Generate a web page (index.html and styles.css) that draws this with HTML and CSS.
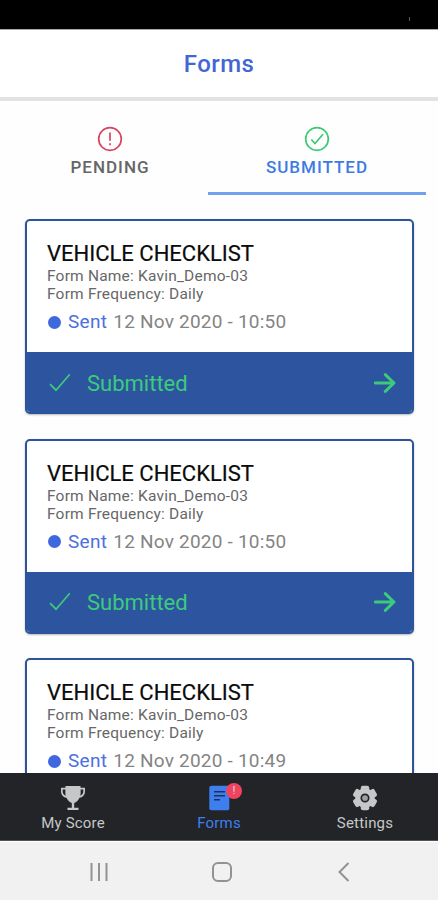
FILE: index.html
```html
<!DOCTYPE html>
<html lang="en">
<head>
<meta charset="utf-8">
<title>Forms</title>
<link rel="stylesheet" href="styles.css">
</head>
<body>
<svg class="defs" width="0" height="0" aria-hidden="true">
  <symbol id="check" viewBox="0 0 22 20"><path d="M1 11.200 7 17.200 20.800 1.300" fill="none" stroke="currentColor" stroke-width="1.700"/></symbol>
  <symbol id="arrow" viewBox="0 0 22 20"><path d="M1.300 10H20M11.300 1.600 20 10l-8.700 8.400" fill="none" stroke="currentColor" stroke-width="2.900" stroke-linecap="round" stroke-linejoin="round"/></symbol>
</svg>
<div class="screen">
  <div class="status"><span class="tick"></span></div>
  <header class="header"><h1>Forms</h1></header>
  <div class="tabs">
    <div class="tab">
      <svg class="tab-icon pending" viewBox="0 0 26 26"><circle cx="13" cy="13" r="11.300"/><path d="M13 6.500v8.300M13 17.300v2"/></svg>
      <span>PENDING</span>
    </div>
    <div class="tab active">
      <svg class="tab-icon done" viewBox="0 0 26 26"><circle cx="13" cy="13" r="11.300"/><path d="m7.300 13.500 3.700 4L19 8.300"/></svg>
      <span>SUBMITTED</span>
    </div>
  </div>
  <main class="list">
    <article class="card">
      <div class="body">
        <h2>VEHICLE CHECKLIST</h2>
        <p>Form Name: Kavin_Demo-03</p>
        <p>Form Frequency: Daily</p>
        <div class="sent"><i class="dot"></i><b>Sent</b><time>12 Nov 2020 - 10:50</time></div>
      </div>
      <div class="foot"><svg class="check"><use href="#check"/></svg><span>Submitted</span><svg class="arrow"><use href="#arrow"/></svg></div>
    </article>
    <article class="card">
      <div class="body">
        <h2>VEHICLE CHECKLIST</h2>
        <p>Form Name: Kavin_Demo-03</p>
        <p>Form Frequency: Daily</p>
        <div class="sent"><i class="dot"></i><b>Sent</b><time>12 Nov 2020 - 10:50</time></div>
      </div>
      <div class="foot"><svg class="check"><use href="#check"/></svg><span>Submitted</span><svg class="arrow"><use href="#arrow"/></svg></div>
    </article>
    <article class="card">
      <div class="body">
        <h2>VEHICLE CHECKLIST</h2>
        <p>Form Name: Kavin_Demo-03</p>
        <p>Form Frequency: Daily</p>
        <div class="sent"><i class="dot"></i><b>Sent</b><time>12 Nov 2020 - 10:49</time></div>
      </div>
    </article>
  </main>
  <nav class="nav">
    <div class="item">
      <svg class="nav-icon" viewBox="0 0 26 26"><path fill="currentColor" d="M5.500 1h15v1.800H25V6.500c0 3.300-2.300 5.900-5.700 6.400-1.300 2.800-3 4.400-5.100 5v4.800H18.500V25h-11v-2.300h4.300v-4.800c-2.100-.6-3.800-2.200-5.100-5C3.300 12.400 1 9.800 1 6.500V2.800h4.500zM2.700 4.500v2c0 2 1.200 3.600 3 4.200C5.200 8.900 5.300 6.600 5.400 4.500zm17.900 0c.1 2.100.2 4.400-.3 6.200 1.800-.6 3-2.200 3-4.200v-2z"/></svg>
      <span>My Score</span>
    </div>
    <div class="item on">
      <div class="icon-wrap">
        <svg class="nav-icon" viewBox="0 0 26 26"><rect x="3.300" y=".7" width="20" height="24.600" rx="2" fill="currentColor"/><path d="M8 6.800h11M8 10.800h11M8 14.800h6" stroke="#202f58" stroke-width="1.500"/></svg>
        <span class="badge">!</span>
      </div>
      <span>Forms</span>
    </div>
    <div class="item">
      <svg class="nav-icon" viewBox="0 0 26 26"><g fill="currentColor"><circle cx="13" cy="13" r="9.800"/><rect x="8.800" y=".7" width="8.400" height="24.600" rx="2"/><rect x="8.800" y=".7" width="8.400" height="24.600" rx="2" transform="rotate(60 13 13)"/><rect x="8.800" y=".7" width="8.400" height="24.600" rx="2" transform="rotate(120 13 13)"/></g><circle cx="13" cy="13" r="3.700" fill="#9fa0a2" stroke="#222427" stroke-width="1.700"/></svg>
      <span>Settings</span>
    </div>
  </nav>
  <div class="system">
    <svg viewBox="0 0 20 20"><path d="M2.500 1v18M10 1v18M17.500 1v18"/></svg>
    <svg viewBox="0 0 20 20"><rect x="1" y="1" width="18" height="18" rx="5"/></svg>
    <svg viewBox="0 0 20 20"><path d="M14.500 1 5.500 10l9 9"/></svg>
  </div>
</div>
</body>
</html>
```
FILE: styles.css
```css
* { box-sizing: border-box; }
body, h1, h2, p { margin: 0; }
body { background: #fff; font-family: Roboto, sans-serif; }
.defs { display: block; height: 0; }
.screen { width: 438px; height: 900px; display: flex; flex-direction: column; overflow: hidden; background: #fefefe; }
.status { height: 29px; flex: none; background: #000; display: flex; justify-content: flex-end; align-items: flex-end; padding: 0 28px 8px; }
.tick { width: 1px; height: 4px; background: #555; }
.header { height: 72px; flex: none; border-top: 1px solid #aaa; border-bottom: 4px solid #e2e2e2; text-align: center; background: #fff; }
h1 { font-size: 24px; line-height: 69px; height: 67px; font-weight: 500; color: #4366d5; letter-spacing: .45px; }
.tabs { height: 94px; flex: none; display: flex; padding: 0 12px; }
.tab { width: 196px; display: flex; flex-direction: column; align-items: center; padding-top: 25px; font-size: 17px; line-height: 20px; font-weight: 500; letter-spacing: 1px; color: #666; }
.tab.active { width: 218px; color: #3c7be4; border-bottom: 3px solid #71a0ed; }
.tab-icon { width: 26px; height: 26px; margin-bottom: 5px; fill: none; stroke-width: 1.7; }
.pending { stroke: #d9435f; }
.done { stroke: #3cca73; }
.list { flex: 1; min-height: 0; overflow: hidden; padding: 24px 24px 0 25px; }
.card { height: 195px; margin-bottom: 24.5px; border: 2px solid #2b549c; border-radius: 5px; background: #fff; box-shadow: 0 1px 2px #8889; overflow: hidden; }
.body { height: 131px; padding: 20px 20px 0; }
h2 { font-size: 22px; line-height: 26px; font-weight: 400; color: #0b0b0b; white-space: nowrap; -webkit-text-stroke: .2px #0b0b0b; }
p { font-size: 15.5px; line-height: 18px; letter-spacing: .2px; color: #676767; white-space: nowrap; }
.sent { display: flex; align-items: center; margin-top: 8px; font-size: 19px; line-height: 22px; white-space: nowrap; }
.dot { width: 13px; height: 13px; border-radius: 50%; background: #3f68df; margin: 0 7px 0 1px; }
.sent b { font-weight: 400; color: #4a70df; letter-spacing: .3px; margin-right: 6px; }
.sent time { color: #848484; letter-spacing: .22px; }
.foot { height: 61px; background: #2d559f; color: #3bcb7b; display: flex; align-items: center; padding: 0 16px 0 22px; font-size: 22px; }
.foot span { padding-top: 1px; }
.check { width: 22px; height: 20px; margin-right: 16px; }
.arrow { width: 22px; height: 20px; margin-left: auto; }
.nav { height: 68px; flex: none; background: #222427; border-bottom: 1px solid #515254; display: grid; grid-template-columns: repeat(3, 1fr); }
.item { display: flex; flex-direction: column; align-items: center; padding-top: 12px; color: #c6c7c8; font-size: 15px; line-height: 20px; letter-spacing: .2px; }
.on { color: #3e7ff0; }
.nav-icon { display: block; width: 26px; height: 26px; margin-bottom: 2px; }
.icon-wrap { position: relative; }
.badge { position: absolute; left: 20px; top: -2px; width: 16px; height: 16px; border-radius: 50%; background: #ed4560; color: #ffd5dc; font-size: 11px; line-height: 16px; text-align: center; letter-spacing: 0; }
.system { height: 59px; flex: none; background: #f1f1f1; border-top: 1px solid #fff; display: flex; justify-content: space-between; align-items: center; padding: 1px 84px 0 89px; }
.system svg { width: 20px; height: 20px; fill: none; stroke: #929292; stroke-width: 2; }
```
